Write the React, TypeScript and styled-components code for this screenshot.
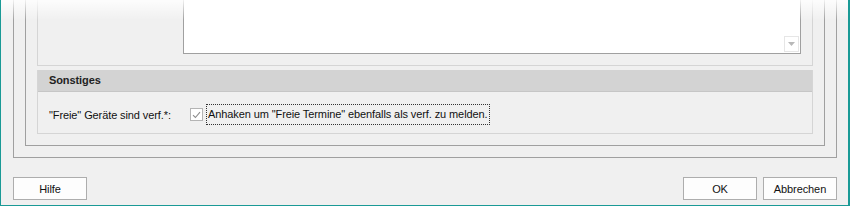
import React from "react";
import styled, { createGlobalStyle } from "styled-components";

const Global = createGlobalStyle`
  html, body { margin: 0; padding: 0; background: #f0f0f0; }
  body { font-family: "Liberation Sans", Arial, sans-serif; font-size: 11px; letter-spacing: -0.1px; color: #000; }
  * { box-sizing: border-box; }
`;

const Window = styled.div`
  position: relative;
  width: 850px;
  height: 206px;
  background: #f0f0f0;
  border-left: 1px solid #1a9a96;
  border-right: 2px solid #1a9a96;
  border-bottom: 1px solid #1a9a96;
  padding: 0 11px 0 12px;
  display: flex;
  flex-direction: column;
  overflow: hidden;
`;

const Fade = styled.div`
  position: absolute;
  left: 0;
  right: 0;
  top: 0;
  height: 20px;
  background: linear-gradient(rgba(255,255,255,0.85), rgba(255,255,255,0));
  pointer-events: none;
`;

const Frame = styled.div<{ $color: string; $pad: number }>`
  border: 1px solid ${(p) => p.$color};
  border-top: none;
  padding: 0 ${(p) => p.$pad}px ${(p) => p.$pad}px;
  display: flex;
  flex-direction: column;
`;

const Outer = styled(Frame)`
  height: 158px;
  flex-shrink: 0;
`;

const Middle = styled(Frame)`
  flex: 1;
`;

const Inner = styled.div`
  flex: 1;
  display: flex;
  flex-direction: column;
  gap: 4px;
`;

const Group = styled.div`
  border: 1px solid #d5d5d5;
  border-top: none;
  display: flex;
  flex-direction: column;
`;

const UpperGroup = styled(Group)`
  height: 66px;
  flex-shrink: 0;
  padding: 0 11px 11px 145px;
`;

const TextArea = styled.div`
  flex: 1;
  position: relative;
  background: #fff;
  border-left: 1px solid #a0a0a0;
  border-bottom: 1px solid #a0a0a0;
  border-right: 1px solid #a0a0a0;
`;

const ScrollArrow = styled.div`
  position: absolute;
  right: 1px;
  bottom: 1px;
  width: 15px;
  height: 16px;
  background: #fff;
  border: 1px solid #e6e6e6;
  display: flex;
  align-items: center;
  justify-content: center;
`;

const LowerGroup = styled(Group)`
  flex: 1;
`;

const Header = styled.div`
  height: 22px;
  background: #d3d3d3;
  border-bottom: 1px solid #c6c6c6;
  padding: 0 11px 1px;
  display: flex;
  align-items: center;
  font-weight: bold;
  color: #222;
`;

const Row = styled.div`
  flex: 1;
  display: flex;
  align-items: center;
  padding: 4px 11px 0 11px;
`;

const Label = styled.span`
  width: 141px;
  flex-shrink: 0;
  color: #111;
  white-space: nowrap;
`;

const CheckBox = styled.span`
  width: 13px;
  height: 13px;
  flex-shrink: 0;
  border: 1px solid #b4b4b4;
  background: #fff;
  display: inline-flex;
  align-items: center;
  justify-content: center;
  margin-right: 3px;
`;

const CheckText = styled.span`
  border: 1px dotted #333;
  padding: 3px 1px 4px 1px;
  white-space: nowrap;
  color: #111;
`;

const Footer = styled.div`
  flex: 1;
  display: flex;
  align-items: flex-start;
  padding-top: 19px;
`;

const Spacer = styled.div`
  flex: 1;
`;

const Button = styled.button<{ $ml?: number }>`
  width: 74px;
  height: 23px;
  margin-left: ${(p) => p.$ml ?? 0}px;
  background: #fdfdfd;
  border: 1px solid #adadad;
  font-family: inherit;
  font-size: 11px;
  letter-spacing: -0.1px;
  color: #111;
  padding: 0;
`;

export default function App() {
  return (
    <>
      <Global />
      <Window>
        <Outer $color="#a0a0a0" $pad={11}>
          <Middle $color="#a0a0a0" $pad={11}>
            <Inner>
              <UpperGroup>
                <TextArea>
                  <ScrollArrow>
                    <svg width="7" height="4" viewBox="0 0 7 4">
                      <path d="M0 0 H7 L3.5 4 Z" fill="#b8b8b8" />
                    </svg>
                  </ScrollArrow>
                </TextArea>
              </UpperGroup>
              <LowerGroup>
                <Header>Sonstiges</Header>
                <Row>
                  <Label>"Freie" Geräte sind verf.*:</Label>
                  <CheckBox>
                    <svg width="9" height="8" viewBox="0 0 9 8">
                      <path d="M1 4.2 L3.4 6.5 L8 1.2" fill="none" stroke="#8c8c8c" strokeWidth="1.1" />
                    </svg>
                  </CheckBox>
                  <CheckText>Anhaken um "Freie Termine" ebenfalls als verf. zu melden.</CheckText>
                </Row>
              </LowerGroup>
            </Inner>
          </Middle>
        </Outer>
        <Footer>
          <Button>Hilfe</Button>
          <Spacer />
          <Button>OK</Button>
          <Button $ml={6}>Abbrechen</Button>
        </Footer>
        <Fade />
      </Window>
    </>
  );
}
